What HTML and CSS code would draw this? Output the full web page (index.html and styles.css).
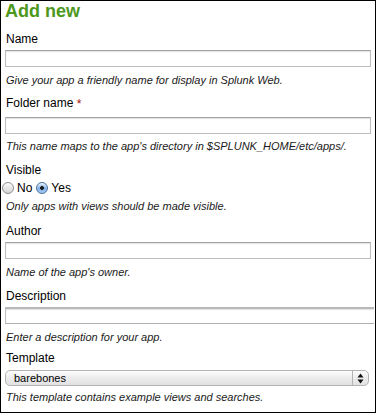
FILE: index.html
```html
<!DOCTYPE html>
<html>
<head>
  <title>Add new app</title>
  <link rel="stylesheet" href="styles.css">
</head>
<body>
  <div class="frame">
    <h1>Add new</h1>

    <form id="appForm">
      <!-- Name -->
      <div class="field field-first">
        <label for="name">Name</label>
        <input type="text" id="name" class="text">
        <p class="help">Give your app a friendly name for display in Splunk Web.</p>
      </div>

      <!-- Folder -->
      <div class="field field-tight">
        <label for="folder">Folder name <span class="req">*</span></label>
        <input type="text" id="folder" class="text">
        <p class="help help-tight">This name maps to the app's directory in $SPLUNK_HOME/etc/apps/.</p>
      </div>

      <!-- Visible -->
      <div class="field">
        <label>Visible</label>
        <div class="radios">
          <input type="radio" id="visNo" name="visible" value="0">
          <label for="visNo" class="opt">No</label>
          <input type="radio" id="visYes" name="visible" value="1" checked>
          <label for="visYes" class="opt">Yes</label>
        </div>
        <p class="help help-radio">Only apps with views should be made visible.</p>
      </div>

      <!-- Author -->
      <div class="field field-loose">
        <label for="author">Author</label>
        <input type="text" id="author" class="text">
        <p class="help">Name of the app's owner.</p>
      </div>

      <!-- Description -->
      <div class="field">
        <label for="description">Description</label>
        <textarea id="description" class="text area" rows="1"></textarea>
        <p class="help">Enter a description for your app.</p>
      </div>

      <!-- Template -->
      <div class="field field-select">
        <label for="template">Template</label>
        <div class="select-wrap">
          <select id="template">
            <option>barebones</option>
            <option>sample_app</option>
          </select>
          <span class="select-arrow">
            <svg width="7" height="11" viewBox="0 0 7 11">
              <path d="M3.5 0.5 L6.5 4.5 L0.5 4.5 Z" fill="#111"/>
              <path d="M3.5 10.5 L6.5 6.5 L0.5 6.5 Z" fill="#111"/>
            </svg>
          </span>
        </div>
        <p class="help help-select">This template contains example views and searches.</p>
      </div>
    </form>
  </div>
</body>
</html>
```

FILE: styles.css
```css
/* halaman dasar */
body {
  margin: 0;
  background: #fff;
  font-family: "Liberation Sans", Arial, Helvetica, sans-serif;
  color: #000;
}

.frame {
  box-sizing: border-box;
  width: 376px;
  height: 413px;
  border: 1px solid #000;
  padding: 0 4px;
  overflow: hidden;
}

h1 {
  margin: 0;
  font-size: 18px;
  line-height: 20px;
  font-weight: bold;
  color: #4c981c;
}

form {
  margin: 0;
}

/* field */
.field {
  margin-top: 10px;
}

.field-first {
  margin-top: 11px;
}

.field-tight {
  margin-top: 9px;
}

.field-loose {
  margin-top: 11px;
}

.field-select {
  margin-top: 7px;
}

.field > label {
  display: block;
  font-size: 12px;
  line-height: 14px;
  padding-left: 1px;
}

.req {
  color: #a50f0f;
  display: inline-block;
  line-height: 17px;
  vertical-align: top;
}

.text {
  display: block;
  box-sizing: border-box;
  width: 366px;
  height: 17px;
  margin: 4px 0 0 0;
  padding: 0 3px;
  border: 1px solid #bdbdbd;
  border-top-color: #a3a3a3;
  box-shadow: inset 0 1px 1px rgba(0, 0, 0, 0.12);
  background: #fff;
  font-family: inherit;
  font-size: 11px;
}

.area {
  width: 369px;
  border-right: none;
  border-top: 2px solid #b9b9b9;
  border-bottom-color: #b0b0b0;
  resize: none;
  overflow: hidden;
  margin-bottom: 3px;
}

.help {
  margin: 7px 0 0 0;
  font-size: 11px;
  line-height: 13px;
  font-style: italic;
  color: #1a1a1a;
  padding-left: 1px;
}

.help-tight {
  margin-top: 6px;
}

.help-radio {
  margin-top: 4px;
}

.help-select {
  margin-top: 5px;
}

/* radio */
.radios {
  display: flex;
  align-items: center;
  height: 16px;
  margin-top: 3px;
}

.radios input {
  appearance: none;
  -webkit-appearance: none;
  box-sizing: border-box;
  width: 12px;
  height: 12px;
  margin: 0 0 0 -3px;
  border: 1px solid #8c8c8c;
  border-radius: 50%;
  background: linear-gradient(#f7f7f7, #d6d6d6);
  box-shadow: inset 0 1px 1px rgba(255, 255, 255, 0.8);
}

.radios input:checked {
  border-color: #4a6f9c;
  background: radial-gradient(circle, #1b1b1b 0, #1b1b1b 1.6px, transparent 2.2px),
    linear-gradient(#d6e8fb, #7fb0e8 55%, #a7cdf5);
}

.radios input + label {
  font-size: 12px;
  line-height: 16px;
  margin: 0 4px 0 3px;
}

.radios input#visYes {
  margin-left: 0;
}

.radios input#visYes + label {
  margin-left: 3px;
}

/* select */
.select-wrap {
  position: relative;
  width: 364px;
  margin-top: 5px;
}

.select-wrap select {
  appearance: none;
  -webkit-appearance: none;
  display: block;
  box-sizing: border-box;
  width: 364px;
  height: 16px;
  margin: 0;
  padding: 0 0 0 8px;
  border: 1px solid #b3b3b3;
  border-radius: 5px;
  background: linear-gradient(#fdfdfd, #ececec 50%, #e2e2e2);
  font-family: inherit;
  font-size: 11px;
  line-height: 14px;
  color: #000;
}

.select-arrow {
  position: absolute;
  top: 1px;
  right: 1px;
  width: 15px;
  height: 14px;
  border-left: 1px solid #b3b3b3;
  display: flex;
  align-items: center;
  justify-content: center;
}
```
